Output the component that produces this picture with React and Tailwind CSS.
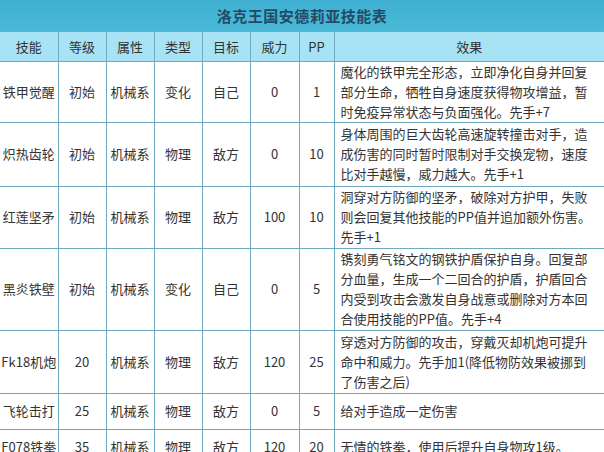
import React from 'react';

const ROWS = [
  { name: '铁甲觉醒', level: '初始', attr: '机械系', kind: '变化', target: '自己', power: '0', pp: '1', h: 'h-[60px]',
    effect: '魔化的铁甲完全形态，立即净化自身并回复部分生命，牺牲自身速度获得物攻增益，暂时免疫异常状态与负面强化。先手+7' },
  { name: '炽热齿轮', level: '初始', attr: '机械系', kind: '物理', target: '敌方', power: '0', pp: '10', h: 'h-[64px]',
    effect: '身体周围的巨大齿轮高速旋转撞击对手，造成伤害的同时暂时限制对手交换宠物，速度比对手越慢，威力越大。先手+1' },
  { name: '红莲坚矛', level: '初始', attr: '机械系', kind: '物理', target: '敌方', power: '100', pp: '10', h: 'h-[62px]',
    effect: '洞穿对方防御的坚矛，破除对方护甲，失败则会回复其他技能的PP值并追加额外伤害。先手+1' },
  { name: '黑炎铁壁', level: '初始', attr: '机械系', kind: '变化', target: '自己', power: '0', pp: '5', h: 'h-[82px]',
    effect: '镌刻勇气铭文的钢铁护盾保护自身。回复部分血量，生成一个二回合的护盾，护盾回合内受到攻击会激发自身战意或删除对方本回合使用技能的PP值。先手+4' },
  { name: 'Fk18机炮', level: '20', attr: '机械系', kind: '物理', target: '敌方', power: '120', pp: '25', h: 'h-[63px]',
    effect: '穿透对方防御的攻击，穿戴灭却机炮可提升命中和威力。先手加1(降低物防效果被挪到了伤害之后)' },
  { name: '飞轮击打', level: '25', attr: '机械系', kind: '物理', target: '敌方', power: '0', pp: '5', h: 'h-[36px]',
    effect: '给对手造成一定伤害' },
  { name: 'F078铁拳', level: '35', attr: '机械系', kind: '物理', target: '敌方', power: '120', pp: '20', h: 'h-[36px]',
    effect: '无情的铁拳，使用后提升自身物攻1级。' },
];

const HEADERS = ['技能', '等级', '属性', '类型', '目标', '威力', 'PP', '效果'];

export default function App() {
  return (
    <div className="w-[604px] h-[452px] overflow-hidden bg-white font-['Noto_Sans_CJK_SC',sans-serif] text-[13px] text-[#333]">
      <div className="h-[32px] flex items-center justify-center bg-gradient-to-b from-[#3fb0d1] to-[#4bbad8] text-[15px] font-bold text-[#244a66] tracking-[0.5px]">
        洛克王国安德莉亚技能表
      </div>
      <table className="w-full table-fixed border-collapse">
        <colgroup>
          <col className="w-[58px]" />
          <col className="w-[48px]" />
          <col className="w-[48px]" />
          <col className="w-[48px]" />
          <col className="w-[48px]" />
          <col className="w-[49px]" />
          <col className="w-[35px]" />
          <col />
        </colgroup>
        <thead>
          <tr className="bg-[#a7e3f4]">
            {HEADERS.map((h) => (
              <th key={h} className="h-[29px] border-x border-b border-[#6fa9bd] first:border-l-0 last:border-r-0 p-0 text-center font-normal text-[#333]">
                {h}
              </th>
            ))}
          </tr>
        </thead>
        <tbody>
          {ROWS.map((r) => (
            <tr key={r.name}>
              <td className={`${r.h} border border-l-0 border-[#6fa9bd] p-0 text-center whitespace-nowrap`}>{r.name}</td>
              <td className="border border-[#6fa9bd] p-0 text-center">{r.level}</td>
              <td className="border border-[#6fa9bd] p-0 text-center">{r.attr}</td>
              <td className="border border-[#6fa9bd] p-0 text-center">{r.kind}</td>
              <td className="border border-[#6fa9bd] p-0 text-center">{r.target}</td>
              <td className="border border-[#6fa9bd] p-0 text-center">{r.power}</td>
              <td className="border border-[#6fa9bd] p-0 text-center">{r.pp}</td>
              <td className="border border-r-0 border-[#6fa9bd] py-0 pl-[6px] pr-[8px] text-left leading-[20px]">{r.effect}</td>
            </tr>
          ))}
        </tbody>
      </table>
    </div>
  );
}
